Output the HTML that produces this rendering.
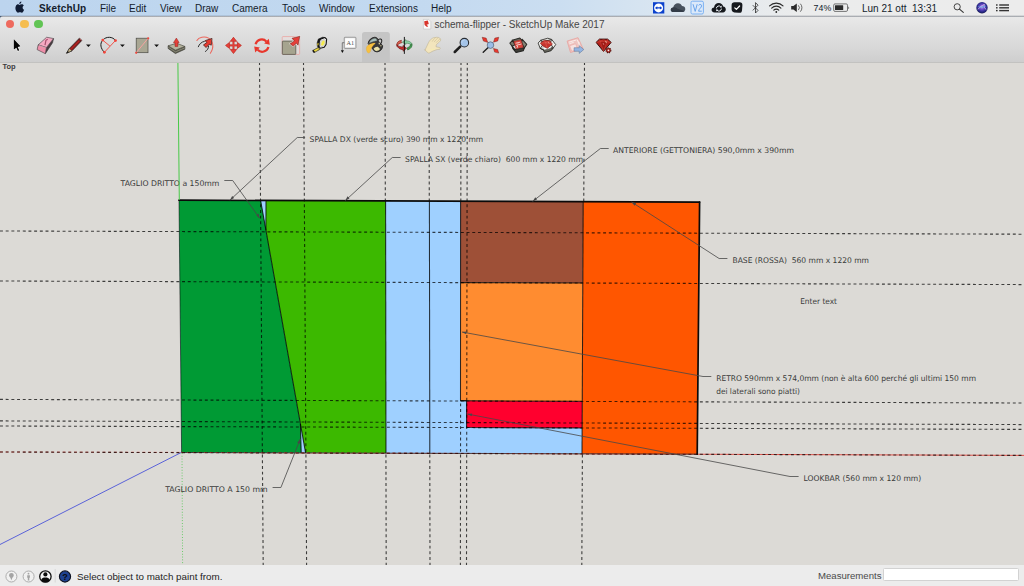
<!DOCTYPE html>
<html lang="it">
<head>
<meta charset="utf-8">
<title>schema-flipper - SketchUp Make 2017</title>
<style>
html,body{margin:0;padding:0;}
body{width:1024px;height:586px;overflow:hidden;position:relative;background:#dcdad6;font-family:"Liberation Sans",sans-serif;}
#menubar{position:absolute;left:0;top:0;width:1024px;height:16px;background:linear-gradient(90deg,#bcd4ee 0,#bfd7ef 200px,#c3d9f0 420px,#cbdef1 560px,#d6e4f1 640px,#e3e9ef 720px,#ebecec 800px,#ececec 1024px);font-size:10px;line-height:17px;color:#141c2c;}
#menubar span{position:absolute;top:0;white-space:nowrap;}
#menubar .b{font-weight:bold;letter-spacing:0.15px;}
#menuline{position:absolute;left:0;top:14.6px;width:1024px;height:2.2px;z-index:5;background:linear-gradient(180deg,rgba(70,78,92,0) 0,rgba(70,78,92,0.22) 40%,rgba(70,78,92,0.5) 100%);}
#titlebar{position:absolute;left:0;top:16px;width:1024px;height:46px;border-top-left-radius:3px;background:linear-gradient(180deg,#e9e9e9 0,#e2e2e2 12px,#d9d9d9 30px,#cecece 46px);}
#tbline{position:absolute;left:0;top:62px;width:1024px;height:1px;background:linear-gradient(180deg,#bdbdbc,#c8c7c4);}
#title{position:absolute;left:434.4px;top:18.9px;font-size:10px;line-height:12px;color:#464646;white-space:nowrap;}
.tl{position:absolute;top:19.7px;width:8.8px;height:8.8px;border-radius:50%;}
#canvas{position:absolute;left:0;top:62px;width:1024px;height:504px;}
#status{position:absolute;left:0;top:565px;width:1024px;height:21px;background:#ececec;font-size:9.8px;color:#1e1e1e;}
#status .t{position:absolute;top:6px;white-space:nowrap;line-height:12px;}
#meas{position:absolute;left:883px;top:3px;width:136.4px;height:13.4px;background:#fff;border:1px solid #d2d2d2;border-radius:1.5px;box-sizing:border-box;}
#toplbl{position:absolute;left:2.4px;top:62.3px;font-size:7.5px;font-weight:bold;color:#3c3c3c;line-height:9px;}
</style>
</head>
<body>
<!-- CANVAS -->
<svg id="canvas" width="1024" height="504" viewBox="0 62 1024 504">
<rect x="0" y="62" width="1024" height="504" fill="#dcdad6"/>
<!--SCENE-START-->
<!-- axes -->
<line x1="182" y1="453" x2="182.6" y2="566" stroke="#5fc85f" stroke-width="1" stroke-dasharray="0.9 1.9"/>
<line x1="181.6" y1="452.3" x2="0" y2="544.5" stroke="#5a62d8" stroke-width="1"/>
<line x1="181" y1="452.4" x2="1024" y2="455.4" stroke="#e0443c" stroke-width="0.9"/>
<line x1="0" y1="452" x2="181" y2="452.4" stroke="#e0443c" stroke-width="0.9" stroke-dasharray="2.8 2.9"/>
<!-- faces -->
<polygon points="179,200 699.6,202 697.2,454.15 181.6,452.4" fill="#9fd0ff"/>
<polygon points="179,200 260.6,200.3 300.4,424 301.2,452.8 181.6,452.4" fill="#009a34"/>
<polygon points="266,200.3 385.6,200.8 386,453.1 305.6,452.8 265.9,230" fill="#3cb900"/>
<polygon points="460.6,201.1 583.2,201.6 582.7,283 460.6,282.6" fill="#9e5037"/>
<polygon points="460.6,282.6 582.7,283 582.2,401.2 460.5,400.8" fill="#ff8c30"/>
<polygon points="466.6,400.8 582.2,401.2 582,428 466.6,427.6" fill="#ff002e"/>
<polygon points="583.2,201.6 699.6,202 697.2,454.15 582,453.76" fill="#ff5600"/>
<polyline points="181.6,452.5 697.2,454.15" stroke-width="0.8" stroke="#2a2a2a" fill="none"/>
<line x1="181.6" y1="452.4" x2="697.2" y2="454.1" stroke="#e0443c" stroke-width="0.9" stroke-dasharray="2.8 2.9"/>
<!-- guides -->
<g stroke="#000" stroke-opacity="0.72" stroke-width="1.1" fill="none" stroke-dasharray="2.95 2.74">
<line x1="259.5" y1="62" x2="263.2" y2="566"/>
<line x1="303.5" y1="62" x2="306.6" y2="566"/>
<line x1="385.00" y1="62.00" x2="385.33" y2="200.80" stroke-dashoffset="0.00"/>
<line x1="385.93" y1="453.10" x2="386.20" y2="566.00" stroke-dashoffset="4.18"/>
<line x1="429.00" y1="62.00" x2="429.28" y2="201.00" stroke-dashoffset="0.00"/>
<line x1="429.78" y1="453.25" x2="430.00" y2="566.00" stroke-dashoffset="4.33"/>
<line x1="461.00" y1="62.00" x2="460.83" y2="201.10" stroke-dashoffset="0.00"/>
<line x1="460.60" y1="400.80" x2="460.40" y2="566.00" stroke-dashoffset="3.09"/>
<line x1="467.3" y1="62" x2="466.5" y2="566"/>
<line x1="584.50" y1="62.00" x2="583.75" y2="201.60" stroke-dashoffset="0.00"/>
<line x1="582.40" y1="453.76" x2="581.80" y2="566.00" stroke-dashoffset="4.84"/>
<line x1="0" y1="231" x2="1024" y2="234.2"/>
<line x1="0" y1="281" x2="1024" y2="284.6"/>
<line x1="0" y1="399.4" x2="1024" y2="403"/>
<line x1="0" y1="420.9" x2="1024" y2="424.6"/>
<line x1="0" y1="426" x2="1024" y2="429.4"/>
<line x1="0" y1="452" x2="1024" y2="455.4"/>
</g>
<!-- edges -->
<g stroke="#000" stroke-opacity="0.78" stroke-width="1.05" fill="none" stroke-linecap="butt">
<polyline points="179,200 181.6,452.4" stroke-width="0.7"/>
<polyline points="260.6,200.3 305.6,452.8"/>
<polyline points="300.4,424 301.2,452.8"/>
<polyline points="266,200.3 265.9,230"/>
<polyline points="385.6,200.8 386,453.1"/>
<polyline points="429.4,201 429.8,453.25"/>
<polyline points="460.6,201.1 460.5,400.8 466.6,400.8 466.6,427.6 582,428"/>
<polyline points="460.6,282.6 582.7,283"/>
<polyline points="460.5,400.8 582.2,401.2"/>
<polyline points="583.2,201.6 582,453.76"/>
</g>
<g stroke="#0a0a0a" fill="none" stroke-linecap="round">
<polyline points="179,200.2 699.6,202.1" stroke-width="1.7"/>
<polyline points="699.6,202 697.2,454.15" stroke-width="1.7"/>
</g>
<!-- leaders -->
<g stroke="#484848" stroke-width="0.8" fill="none" stroke-linejoin="round">
<polyline points="305.1,137.5 297.3,137.5 229.9,200.2"/>
<polyline points="400.6,157.5 392.3,157.5 345.3,200.6"/>
<polyline points="608.7,148.5 600.4,148.5 532.6,201.4"/>
<polyline points="224.3,180.5 232.7,180.5 259.6,218.2"/>
<polyline points="727.4,258.5 719.1,258.5 631.5,202"/>
<polyline points="711.3,376.5 703,376.5 462,332"/>
<polyline points="798.6,476.5 790,476.5 467.5,414"/>
<polyline points="272.6,487.5 280.9,487.5 300.3,439"/>
</g>
<g fill="#484848" stroke="none">
<path d="M229.9,200.2 l4.2,-2.2 l-1.9,-2.1z"/>
<path d="M345.3,200.6 l4.2,-2.2 l-1.9,-2.1z"/>
<path d="M532.6,201.4 l4.4,-1.8 l-1.7,-2.3z"/>
<path d="M259.6,218.2 l-1,-4.7 l-2.4,1.7z"/>
<path d="M631.5,202 l3.1,3.7 l1.6,-2.5z"/>
<path d="M462,332 l4.1,2.3 l0.6,-2.9z"/>
<path d="M467.5,414 l4.1,2.3 l0.6,-2.9z"/>
<path d="M300.3,439 l-0.4,4.8 l-2.7,-1.1z"/>
</g>
<!-- labels -->
<g font-family="'DejaVu Sans','Liberation Sans',sans-serif" font-size="7.8" fill="#3a3a3a">
<text x="309.6" y="142" textLength="173.6" lengthAdjust="spacingAndGlyphs">SPALLA DX (verde scuro) 390 mm x 1220 mm</text>
<text x="405.1" y="162" textLength="178" lengthAdjust="spacingAndGlyphs" xml:space="preserve">SPALLA SX (verde chiaro)  600 mm x 1220 mm</text>
<text x="613" y="153" textLength="181" lengthAdjust="spacingAndGlyphs">ANTERIORE (GETTONIERA) 590,0mm x 390mm</text>
<text x="120.6" y="185.5" textLength="98.8" lengthAdjust="spacingAndGlyphs">TAGLIO DRITTO a 150mm</text>
<text x="732.5" y="263.2" textLength="136.5" lengthAdjust="spacingAndGlyphs" xml:space="preserve">BASE (ROSSA)  560 mm x 1220 mm</text>
<text x="800.2" y="303.5" textLength="36.8" lengthAdjust="spacingAndGlyphs">Enter text</text>
<text x="716.2" y="381.2" textLength="259.8" lengthAdjust="spacingAndGlyphs">RETRO 590mm x 574,0mm (non è alta 600 perché gli ultimi 150 mm</text>
<text x="716.2" y="393.5" textLength="83.8" lengthAdjust="spacingAndGlyphs">dei laterali sono piatti)</text>
<text x="803.5" y="480.8" textLength="117.7" lengthAdjust="spacingAndGlyphs">LOOKBAR (560 mm x 120 mm)</text>
<text x="165.2" y="492.2" textLength="102.4" lengthAdjust="spacingAndGlyphs">TAGLIO DRITTO A 150 mm</text>
</g>
<line x1="177.9" y1="62" x2="179.3" y2="200" stroke="#3fc83f" stroke-width="0.95"/>
<!--SCENE-END-->
</svg>
<div id="toplbl">Top</div>

<!-- MENU BAR -->
<div id="menubar">
<span class="b" style="left:39px">SketchUp</span>
<span style="left:100px">File</span>
<span style="left:129px">Edit</span>
<span style="left:160px">View</span>
<span style="left:195px">Draw</span>
<span style="left:232px">Camera</span>
<span style="left:282px">Tools</span>
<span style="left:319px">Window</span>
<span style="left:369px">Extensions</span>
<span style="left:431px">Help</span>
<span style="left:813.6px;font-size:8.8px">74%</span>
<span style="left:862px">Lun 21 ott&nbsp; 13:31</span>
</div>
<!--MI-START-->
<svg id="menuicons" width="1024" height="16" viewBox="0 0 1024 16" style="position:absolute;left:0;top:0">
<!-- apple -->
<g fill="#101c34" transform="translate(15.1,1.3) scale(0.92) translate(-15.1,-1.3)">
<path d="M19.6,5.2 C20.6,5.1 21.4,4.4 22.3,4.5 C23.3,4.5 24.1,5 24.6,5.8 C23.6,6.5 23.2,7.3 23.3,8.3 C23.4,9.4 24,10.2 24.9,10.6 C24.5,11.8 23.9,12.8 23.1,13.4 C22.4,13.9 21.8,13.5 21,13.2 C20.2,12.9 19.6,13.2 18.9,13.5 C18.2,13.8 17.6,13.5 17,12.8 C15.6,11.2 14.9,8.6 15.8,6.6 C16.4,5.2 17.6,4.5 18.6,4.6 C19,4.7 19.3,5.1 19.6,5.2 Z"/>
<path d="M19.6,4.3 C19.5,3 20.6,1.8 21.9,1.6 C22.1,3 20.9,4.3 19.6,4.3 Z"/>
</g>
<!-- teamviewer -->
<rect x="653" y="2.2" width="11.3" height="11.3" fill="#0b41cd"/>
<circle cx="658.6" cy="7.9" r="4.5" fill="#fff"/>
<path d="M654.9,7.9 L657.3,6.2 V7.3 H659.9 V6.2 L662.3,7.9 L659.9,9.6 V8.5 H657.3 V9.6 Z" fill="#0b41cd"/>
<!-- onedrive cloud -->
<path d="M673.6,12 C671.6,12 670.6,10.8 670.8,9.4 C671,8.2 672,7.4 673.2,7.4 C673.6,5 675.6,3.2 678,3.2 C680,3.2 681.4,4.4 682,6 C683.8,6 685.4,7.2 685.3,9.2 C685.2,10.8 684,12 682.4,12 Z" fill="#48525e"/>
<path d="M673.6,12 C671.6,12 670.6,10.8 670.8,9.4 C671,8.2 672,7.4 673.2,7.4 C675,7.2 676.4,7.8 677.4,8.8 L684.6,11 C684,11.6 683.2,12 682.4,12 Z" fill="#333c48"/>
<!-- V2 -->
<rect x="691" y="1.2" width="12.4" height="12.8" rx="1.4" fill="#dbe9fa" stroke="#6faaf2" stroke-width="0.9"/>
<path d="M693,4.2 L695.2,11.4 L697.2,4.2 M698.6,5.4 C698.8,4.4 701.6,3.8 701.6,5.8 C701.6,7.6 698.6,9 698.6,11.2 H701.8" fill="none" stroke="#5d9ce9" stroke-width="0.9"/>
<!-- cloud sync -->
<path d="M714.6,12.5 C712.6,12.5 711.4,11.2 711.6,9.6 C711.8,8.4 712.8,7.6 714,7.6 C714.2,5 716.2,3 718.8,3 C721,3 722.6,4.4 723.2,6.4 C724.8,6.6 725.9,7.8 725.8,9.6 C725.7,11.2 724.6,12.5 723,12.5 Z" fill="#16191e"/>
<path d="M716.4,8.4 A2.5,2.5 0 0 1 720.8,6.8 M721.4,8.6 A2.5,2.5 0 0 1 717,10.2" fill="none" stroke="#e8eef4" stroke-width="1"/>
<path d="M719.8,7.4 L721.8,7.4 L721.6,5.6 Z M718,9.6 L716,9.6 L716.2,11.4 Z" fill="#e8eef4"/>
<!-- check -->
<path d="M734.6,2.2 H739.6 C741.6,2.2 742.6,3.4 742.4,5.4 L742,10.4 C741.8,12.4 740.6,13 738.6,12.8 L734.4,12.4 C732.4,12.2 731.6,11 731.6,9 V5 C731.6,3.2 732.6,2.2 734.6,2.2 Z" fill="#16191e"/>
<path d="M734.8,7.8 L736.4,9.4 L739.6,6" fill="none" stroke="#fff" stroke-width="1.2" stroke-linecap="round" stroke-linejoin="round"/>
<!-- bluetooth -->
<path d="M752.8,5.2 L758,10.4 L755.5,13 V2.6 L758,5.2 L752.8,10.4" fill="none" stroke="#2a2a2a" stroke-width="0.8" stroke-linejoin="round"/>
<!-- wifi -->
<g fill="none" stroke="#2a2a2a" stroke-width="1.15" stroke-linecap="round">
<path d="M769.6,5.9 A9.6,9.6 0 0 1 783,5.9"/>
<path d="M771.7,8.1 A6.5,6.5 0 0 1 780.9,8.1"/>
<path d="M773.8,10.2 A3.5,3.5 0 0 1 778.8,10.2"/>
</g>
<circle cx="776.3" cy="12" r="0.9" fill="#2a2a2a"/>
<!-- volume -->
<path d="M791.2,6 H793.4 L796.8,3.4 V12 L793.4,9.4 H791.2 Z" fill="#2a2a2a"/>
<path d="M798.6,5.6 A3,3 0 0 1 798.6,9.8 M800.6,4 A5.4,5.4 0 0 1 800.6,11.4" fill="none" stroke="#444" stroke-width="0.8" stroke-linecap="round"/>
<!-- battery -->
<rect x="833.7" y="3.9" width="13.8" height="7.5" rx="1.3" fill="none" stroke="#555" stroke-width="0.8"/>
<rect x="835" y="5.2" width="8.2" height="4.9" rx="0.4" fill="#2a2a2a"/>
<path d="M848.4,6.4 C849.4,6.6 849.4,8.8 848.4,9 Z" fill="#555"/>
<!-- search -->
<circle cx="957.2" cy="6.8" r="3.1" fill="none" stroke="#333" stroke-width="0.9"/>
<path d="M959.5,9.2 L963.3,12.4" stroke="#333" stroke-width="1.1" stroke-linecap="round"/>
<!-- siri -->
<defs>
<radialGradient id="siri" cx="0.5" cy="0.45" r="0.6">
<stop offset="0" stop-color="#b8a0e8"/><stop offset="0.35" stop-color="#6a4ac8"/><stop offset="0.7" stop-color="#2a2a8a"/><stop offset="1" stop-color="#14143c"/>
</radialGradient>
</defs>
<circle cx="982" cy="7.7" r="5.7" fill="url(#siri)"/>
<path d="M978,9.4 C980,6.6 982,5.6 984.4,4.4 C983.6,6.4 984.6,8.4 986.4,9.8" fill="none" stroke="#e8c8f4" stroke-width="0.9" opacity="0.85"/>
<path d="M978.4,6.4 C980,7.4 983,7.6 985.8,6" fill="none" stroke="#50c8e8" stroke-width="0.8" opacity="0.8"/>
<!-- list -->
<g fill="#333">
<rect x="996" y="4.3" width="1.6" height="1.4"/><rect x="999.2" y="4.3" width="9.8" height="1.4"/>
<rect x="996" y="7.1" width="1.6" height="1.4"/><rect x="999.2" y="7.1" width="9.8" height="1.4"/>
<rect x="996" y="9.9" width="1.6" height="1.4"/><rect x="999.2" y="9.9" width="9.8" height="1.4"/>
</g>
</svg>
<!--MI-END-->
<div id="menuline"></div>

<!-- TITLE + TOOLBAR -->
<div style="position:absolute;left:0;top:16px;width:4px;height:4px;background:#3a5678"></div>
<div id="titlebar"></div>
<div id="tbline"></div>
<div class="tl" style="left:5.6px;background:#ee6a5e"></div>
<div class="tl" style="left:19.85px;background:#f5bd4f"></div>
<div class="tl" style="left:34px;background:#61c454"></div>
<div id="title">schema-flipper - SketchUp Make 2017</div>
<!--TOOLBAR-START-->
<svg id="toolbar" width="1024" height="46" viewBox="0 16 1024 46" style="position:absolute;left:0;top:16px">
<!-- title doc icon -->
<g>
<path d="M423.4,19.4 h5.2 l2.2,2.2 v7.4 h-7.4z" fill="#fbfbfb" stroke="#b9b9b9" stroke-width="0.5"/>
<path d="M424.2,21.2 l3.6,-0.6 l1,3.4 l-2.2,0.8 l1.6,1.4 l-1.2,0.9 l-2.4,-2.2z" fill="#d8352c"/>
</g>
<!-- selected tool bg -->
<path d="M362,62 V34.5 a2.5,2.5 0 0 1 2.5,-2.5 h22.8 a2.5,2.5 0 0 1 2.5,2.5 V62z" fill="#c5c5c5"/>
<!-- 1 select arrow -->
<g transform="translate(4,32) scale(0.05467)" stroke-linejoin="round">
<path d="M180,134 L180,322 L226,286 L254,348 L278,336 L250,276 L302,262 Z" fill="#060606" stroke="#f4f4f4" stroke-width="22"/>
<path d="M180,134 L180,322 L226,286 L254,348 L278,336 L250,276 L302,262 Z" fill="#060606"/>
</g>
<!-- 2 eraser -->
<g transform="translate(4,32) scale(0.05467)" stroke-linejoin="round">
<path d="M775,286 L906,120 L888,196 L756,396 Z" fill="#4a3a40" stroke="#3a3a3a" stroke-width="12"/>
<path d="M625,236 L780,96 L906,120 L775,286 Z" fill="#f5aac2" stroke="#4a4448" stroke-width="12"/>
<path d="M625,236 L775,286 L756,396 L606,322 Z" fill="#ef8fa9" stroke="#4a4448" stroke-width="12"/>
<path d="M750,240 L768,150 L800,132" fill="none" stroke="#a8506e" stroke-width="22"/>
<path d="M640,246 L770,290" fill="none" stroke="#f9c6d6" stroke-width="10"/>
</g>
<!-- 3 pencil -->
<g>
<path d="M66.6,53.2 L69.4,48.4 L79.4,38.2 L81.9,40.4 L72,50.8 Z" fill="#96181a" stroke="#1c1c1c" stroke-width="0.7" stroke-linejoin="round"/>
<path d="M66.6,53.2 L69.4,48.4 L72,50.8 Z" fill="#c8b888" stroke="#1c1c1c" stroke-width="0.5" stroke-linejoin="round"/>
<path d="M66.6,53.2 L67.8,51.1 L68.9,52.2 Z" fill="#111"/>
<path d="M70.6,49.7 L80.6,39.4" stroke="#d8483a" stroke-width="0.7" stroke-dasharray="1 0.5"/>
<path d="M78.5,39.2 L80.9,41.4" stroke="#2a2a2a" stroke-width="0.8"/>
<path d="M79.6,38.3 L81.8,40.3" stroke="#c88a8a" stroke-width="0.7"/>
<path d="M86,44.5 h4.8 l-2.4,2.5z" fill="#111"/>
</g>
<!-- 4 arc -->
<g fill="none">
<path d="M104.4,52.3 C100.6,48.6 99.6,43.6 102.8,40 C106.4,36.2 112.6,36.4 115.6,40.6" stroke="#1a1a1a" stroke-width="1"/>
<path d="M102.8,40.2 L110,46.2 M115.4,40.6 L104.4,52.3" stroke="#f0463c" stroke-width="0.9"/>
<circle cx="102.8" cy="40.1" r="1.4" fill="#f0463c"/>
<circle cx="115.5" cy="40.6" r="1.4" fill="#f0463c"/>
<circle cx="104.4" cy="52.3" r="1.4" fill="#f0463c"/>
<path d="M120,44.5 h4.8 l-2.4,2.5z" fill="#111"/>
</g>
<!-- 5 rectangle -->
<g>
<rect x="136.2" y="38.2" width="11.8" height="14.5" fill="#a9a794" stroke="#4a4a44" stroke-width="0.7"/>
<path d="M136.2,52.7 L148.1,38.3" stroke="#f6a3a0" stroke-width="1"/>
<circle cx="136.2" cy="52.8" r="1.1" fill="#f0463c"/>
<circle cx="148.2" cy="38.3" r="1.1" fill="#f0463c"/>
<path d="M154.2,44.5 h4.8 l-2.4,2.5z" fill="#111"/>
</g>
<!-- 6 push/pull -->
<g transform="translate(130,32) scale(0.06054)" stroke-linejoin="round">
<path d="M630,228 L750,300 L906,238 L906,284 L750,356 L630,272 Z" fill="#5e5d50" stroke="#3a3a32" stroke-width="11"/>
<path d="M632,250 L750,328 L906,262" fill="none" stroke="#a9a894" stroke-width="9"/>
<path d="M630,228 L770,186 L906,238 L750,300 Z" fill="#b5b39e" stroke="#4a4a40" stroke-width="11"/>
<path d="M744,238 V176 H718 L766,100 L812,176 H790 V238 Z" fill="#e6403a" stroke="#8a1e18" stroke-width="8"/>
</g>
<!-- 7 follow me -->
<g transform="translate(190,32) scale(0.05467)" fill="none" stroke-linecap="round" stroke-linejoin="round">
<path d="M126,156 C160,100 260,72 340,112 C420,160 450,270 372,390" stroke="#ec665c" stroke-width="19"/>
<path d="M152,270 C168,222 210,180 262,172" stroke="#2c2c2c" stroke-width="18"/>
<path d="M282,356 C316,336 340,300 340,258" stroke="#2c2c2c" stroke-width="18"/>
<path d="M396,120 L276,158 L308,192 L246,238 L296,284 L352,224 L384,238 Z" fill="#e63c32" stroke="#3a1410" stroke-width="13"/>
</g>
<!-- 8 move -->
<g transform="translate(190,32) scale(0.05467)" fill="#e5403a" stroke="#a8281f" stroke-width="6" stroke-linejoin="round">
<path d="M795,96 L852,170 H810 V230 H868 V190 L940,245 L868,300 V260 H810 V320 H852 L795,394 L738,320 H780 V260 H722 V300 L650,245 L722,190 V230 H780 V170 H738 Z"/>
<path d="M738,170 L795,96 L852,170 Z M868,190 L940,245 L868,300 Z M852,320 L795,394 L738,320 Z M722,300 L650,245 L722,190 Z" />
<path d="M738,170 L722,190 M852,170 L868,190 M868,300 L852,320 M722,300 L738,320" stroke="#d04038" stroke-width="22" opacity="0.55"/>
</g>
<!-- 9 rotate -->
<g fill="none" stroke="#e8372d" stroke-width="2.2">
<path d="M255.6,44.2 A6.4,6.4 0 0 1 266.4,41.4"/>
<path d="M268.4,47 A6.4,6.4 0 0 1 257.6,49.8"/>
</g>
<path d="M264.2,43.6 L269.8,44.8 L268.8,38.8 Z" fill="#e8372d"/>
<path d="M259.8,47.6 L254.2,46.4 L255.2,52.4 Z" fill="#e8372d"/>
<!-- 10 scale -->
<g transform="translate(248,32) scale(0.05467)" stroke-linejoin="round">
<rect x="626" y="84" width="318" height="326" rx="14" fill="#e9dfdd" fill-opacity="0.55" stroke="#ee9a96" stroke-width="12"/>
<rect x="628" y="166" width="246" height="244" rx="12" fill="#a6a48f" stroke="#4e4e46" stroke-width="13"/>
<path d="M948,78 L804,114 L848,164 L770,216 L826,262 L886,206 L916,242 Z" fill="#e5403a" stroke="#f4f0ee" stroke-width="26"/>
<path d="M948,78 L804,114 L848,164 L770,216 L826,262 L886,206 L916,242 Z" fill="#e5403a" stroke="#5a1812" stroke-width="9"/>
</g>
<!-- 11 tape measure -->
<g transform="translate(304,32) scale(0.05467)" stroke-linejoin="round">
<path d="M160,338 L262,282 L290,318 L196,372 Z" fill="#ecd840" stroke="#2a2a22" stroke-width="12"/>
<path d="M150,342 L176,328 L204,372 L178,386 Z" fill="#151515"/>
<path d="M232,300 L268,282 L290,318 L250,336" fill="none" stroke="#6e6420" stroke-width="8"/>
<path d="M240,200 L262,130 L340,96 L376,100 L300,140 L276,290 L244,262 Z" fill="#161616" stroke="#111" stroke-width="10"/>
<path d="M242,210 L274,196 L272,240 L244,252 Z" fill="#d8c430"/>
<path d="M300,132 L380,100 L414,130 L404,226 L370,280 L296,298 L274,262 L280,172 Z" fill="#f0f0ee" stroke="#141414" stroke-width="20"/>
<path d="M316,160 L372,138 L392,160 L384,226 L358,262 L312,272 L300,246 L304,186 Z" fill="#e4e4e0" stroke="#8a8a88" stroke-width="7"/>
<ellipse cx="346" cy="202" rx="28" ry="50" transform="rotate(24 346 202)" fill="#f4ea4e"/>
</g>
<!-- 12 text -->
<g transform="translate(304,32) scale(0.05467)">
<rect x="737" y="97" width="212" height="202" rx="12" fill="#fdfdfd" stroke="#7c7c7c" stroke-width="15"/>
<rect x="748" y="108" width="190" height="180" rx="6" fill="none" stroke="#c8c8c8" stroke-width="6"/>
<text x="776" y="232" font-family="'Liberation Serif',serif" font-size="128" fill="#505050" textLength="140" lengthAdjust="spacingAndGlyphs">A1</text>
<path d="M737,196 H700 V340" fill="none" stroke="#3a3a3a" stroke-width="11"/>
<path d="M674,336 h56 l-28,50z" fill="#111"/>
</g>
<!-- 13 paint bucket -->
<g transform="translate(362,32) scale(0.05467)" stroke-linejoin="round" stroke-linecap="round">
<path d="M300,135 C330,118 362,128 362,160 C362,185 352,200 345,208" fill="none" stroke="#222" stroke-width="19"/>
<path d="M112,205 C118,150 170,100 232,96 C270,96 296,120 300,168 L378,250 C384,300 340,352 290,362 C250,368 215,350 200,320 Z" fill="#383838" stroke="#1a1a1a" stroke-width="14"/>
<path d="M132,205 C140,160 185,118 236,116 C262,118 276,136 276,160 C250,164 175,180 132,205 Z" fill="#a8c0bb" stroke="#5e6664" stroke-width="8"/>
<path d="M212,308 C228,282 262,268 290,272 L330,312 C320,332 290,348 262,348 C240,346 222,330 212,308 Z" fill="#e9e1a6"/>
<ellipse cx="316" cy="210" rx="13" ry="17" fill="#d9cf98"/>
<ellipse cx="346" cy="252" rx="11" ry="15" fill="#d9cf98"/>
<path d="M236,200 C180,200 110,230 86,270 C70,310 86,372 116,386 C140,384 156,366 160,340 C166,290 200,240 240,214 Z" fill="#f6c040" stroke="#d9a02c" stroke-width="5"/>
</g>
<!-- 14 orbit -->
<g transform="translate(362,32) scale(0.05467)" stroke-linejoin="round">
<path d="M722,152 C670,160 636,190 636,230 L640,262 C652,224 690,204 728,196 L716,176 Z" fill="#d8604f" stroke="#7a2018" stroke-width="11"/>
<path d="M636,230 C640,290 700,322 752,322 L752,352 L814,298 L752,246 L752,274 C700,272 660,258 640,236 Z" fill="#c4302e" stroke="#6a1614" stroke-width="12"/>
<path d="M800,140 L738,186 L800,226 L800,204 C840,204 880,214 900,236 C920,200 880,164 800,160 Z" fill="#8ed4a8" stroke="#3e7a4c" stroke-width="11"/>
<path d="M900,236 C912,262 890,300 836,326 L826,290 C850,284 880,262 884,232 Z" fill="#4eaa5a" stroke="#2e6a38" stroke-width="11"/>
<path d="M916,214 C924,260 900,300 838,328 L834,300 C880,280 900,250 900,226 Z" fill="#4eaa5a" stroke="#2e6a38" stroke-width="11"/>
<path d="M775,90 V400" stroke="#0c0c0c" stroke-width="17" fill="none"/>
</g>
<!-- 15 pan hand -->
<g transform="translate(418,32) scale(0.05467)" stroke-linejoin="round" stroke-linecap="round">
<path d="M130,328 C150,290 170,240 192,196 C206,166 226,140 246,128 C266,108 296,98 322,100 C344,94 368,96 384,108 C404,112 418,128 414,150 C410,170 380,190 352,214 C336,228 328,246 330,270 C350,276 380,280 398,284 C410,292 408,312 396,316 C372,320 350,320 332,326 C300,338 262,352 236,368 C220,380 204,388 190,384 C166,372 142,350 130,328 Z" fill="#f3e5bc" stroke="#b8aa88" stroke-width="9"/>
<path d="M262,170 C276,144 296,122 318,106 M300,178 C318,150 340,126 366,106 M336,190 C356,166 380,144 404,126" fill="none" stroke="#b9ab88" stroke-width="8"/>
<path d="M240,320 C262,310 290,312 300,318" fill="none" stroke="#f7f0a8" stroke-width="12"/>
</g>
<!-- 16 zoom -->
<g transform="translate(418,32) scale(0.05467)">
<path d="M672,366 L772,268" stroke="#1e1e1e" stroke-width="46" stroke-linecap="round"/>
<circle cx="848" cy="195" r="78" fill="#a4c4e9" stroke="#2a2e34" stroke-width="20"/>
<path d="M800,200 A50,50 0 0 1 850,146" fill="none" stroke="#c4daf4" stroke-width="14"/>
</g>
<!-- 17 zoom extents -->
<g transform="translate(476,32) scale(0.05467)" stroke-linejoin="round">
<path d="M132,370 L218,290" stroke="#1e1e1e" stroke-width="26" stroke-linecap="round"/>
<circle cx="265" cy="240" r="60" fill="#9cbde6" stroke="#46566c" stroke-width="12"/>
<g fill="#e8382e" stroke="#5a1812" stroke-width="7">
<path d="M112,96 L186,112 L216,190 L136,166 Z"/>
<path d="M416,96 L398,164 L320,186 L344,112 Z"/>
<path d="M416,386 L340,368 L320,300 L396,320 Z"/>
</g>
</g>
<!-- 18 3d warehouse -->
<g transform="translate(504,32) scale(0.05467)" stroke-linejoin="round">
<path d="M108,205 L160,150 L200,235 L150,262 Z" fill="#77776c" stroke="#2a2a26" stroke-width="19"/>
<path d="M150,150 L290,112 L336,160 L196,196 Z" fill="#6a6a60" stroke="#2a2a26" stroke-width="19"/>
<path d="M330,132 L416,226 L372,292 L326,200 Z" fill="#858578" stroke="#2a2a26" stroke-width="19"/>
<path d="M150,262 L200,322 L350,290 L372,292 L352,342 L222,376 L160,300 Z" fill="#3e3e38" stroke="#222220" stroke-width="19"/>
<path d="M180,172 L310,144 L352,280 L222,312 Z" fill="#d8463e" stroke="#8a201a" stroke-width="8"/>
<path d="M212,206 L296,186 M222,246 L262,236 L256,210 M270,232 L320,220 M232,282 L250,278 L244,250" fill="none" stroke="#f8e4e0" stroke-width="15"/>
</g>
<!-- 19 extension warehouse -->
<g transform="translate(504,32) scale(0.05467)" stroke-linejoin="round">
<path d="M624,202 L672,150 L706,240 L662,300 Z" fill="#ededea" stroke="#33332f" stroke-width="16"/>
<path d="M672,150 L800,114 L872,136 L720,180 Z" fill="#e4e4e0" stroke="#33332f" stroke-width="16"/>
<path d="M872,136 L946,230 L902,292 L846,206 Z" fill="#f2f2ee" stroke="#33332f" stroke-width="16"/>
<path d="M662,300 L720,322 L860,290 L902,292 L862,342 L742,376 L720,330 Z" fill="#66665c" stroke="#222220" stroke-width="16"/>
<path d="M706,296 L742,330 L850,300 L880,262" fill="#fafafa" stroke="#44443e" stroke-width="8"/>
<path d="M664,204 L736,152 L838,158 L884,222 L792,300 L704,252 Z" fill="#c8322c" stroke="#6a1410" stroke-width="9"/>
<path d="M664,204 L760,196 L884,222 M736,152 L760,196 L792,300 M838,158 L760,196" fill="none" stroke="#e87a70" stroke-width="7"/>
<path d="M812,182 L826,208" stroke="#f4d8c8" stroke-width="12" fill="none"/>
</g>
<!-- 20 layout -->
<g transform="translate(560,32) scale(0.05467)" stroke-linejoin="round">
<path d="M130,166 L330,104 L420,300 L192,376 Z" fill="#eec6c2" stroke="#e89c98" stroke-width="13"/>
<path d="M164,186 L300,146 M172,214 L250,190 M314,140 L372,280 M340,176 L356,214" fill="none" stroke="#faf0ee" stroke-width="16"/>
<path d="M176,250 L286,216 L330,330 L214,350 Z" fill="#f6e2e0" stroke="#eaa09c" stroke-width="10"/>
<path d="M258,288 H352 V250 L436,320 L352,392 V352 H258 Z" fill="#94b5e2" stroke="#586c8e" stroke-width="9"/>
</g>
<!-- 21 ruby gear -->
<g transform="translate(560,32) scale(0.05467)" stroke-linejoin="round">
<path d="M660,190 L722,130 L870,130 L936,190 L796,356 Z" fill="#b3221c" stroke="#2a0806" stroke-width="17"/>
<path d="M660,190 L740,176 L856,176 L936,190 M722,130 L740,176 L796,356 L856,176 L870,130 M740,176 L796,134 L856,176" fill="none" stroke="#e2564a" stroke-width="8"/>
<path d="M740,178 L856,178 L796,340 Z" fill="#8e1812" opacity="0.55"/>
<path d="M834,164 L848,198" stroke="#f6c8b0" stroke-width="16" fill="none"/>
<path d="M790,206 L800,232" stroke="#f0a0a0" stroke-width="14" fill="none"/>
<circle cx="886" cy="336" r="44" fill="#b22a22" stroke="#4a1410" stroke-width="20" stroke-dasharray="20 14.5"/>
<circle cx="886" cy="336" r="36" fill="#b22a22" stroke="#5a1a14" stroke-width="8"/>
<circle cx="886" cy="336" r="16" fill="#ececec"/>
</g>
</svg>
<!--TOOLBAR-END-->

<!-- STATUS BAR -->
<div id="status">
<!--ST-START-->
<svg width="80" height="21" viewBox="0 565 80 21" style="position:absolute;left:0;top:0">
<circle cx="11.4" cy="576.5" r="5.5" fill="#f1f1f1" stroke="#a6a6a6" stroke-width="0.9"/>
<path d="M11.4,572.9 a2.4,2.4 0 0 1 2.4,2.4 c0,1.3 -1.5,2.2 -1.8,3.4 l-0.6,1.6 l-0.6,-1.6 c-0.3,-1.2 -1.8,-2.1 -1.8,-3.4 a2.4,2.4 0 0 1 2.4,-2.4z" fill="#a4a4a4"/>
<circle cx="28.6" cy="576.5" r="5.5" fill="#f1f1f1" stroke="#a6a6a6" stroke-width="0.9"/>
<circle cx="28.5" cy="573.7" r="0.9" fill="#a4a4a4"/>
<path d="M27.2,575.2 h2.7 v2.6 h-0.6 v2.8 h-1.5 v-2.8 h-0.6z" fill="#a4a4a4"/>
<circle cx="45.4" cy="576.5" r="5.7" fill="#f6f6f6" stroke="#121212" stroke-width="1.3"/>
<circle cx="45.4" cy="574.4" r="2.1" fill="#0c0c0c"/>
<path d="M41.2,580.2 C41.6,577.6 43.4,577.4 45.4,577.4 C47.4,577.4 49.2,577.6 49.6,580.2 C48.6,581.6 47,582.2 45.4,582.2 C43.8,582.2 42.2,581.6 41.2,580.2 Z" fill="#0c0c0c"/>
<path d="M55.2,569 V582.5" stroke="#d4d4d4" stroke-width="0.8"/>
<circle cx="65" cy="576.5" r="5.6" fill="#1e4190" stroke="#0e1220" stroke-width="1.1"/>
<text x="65" y="579.9" text-anchor="middle" font-family="'Liberation Sans',sans-serif" font-weight="bold" font-size="9.2" fill="#080a12">?</text>
</svg>
<!--ST-END-->
<span class="t" style="left:77px">Select object to match paint from.</span>
<span class="t" style="left:818px;top:5.4px;color:#4a4a4a;font-size:9.6px">Measurements</span>
<div id="meas"></div>
</div>
</body>
</html>
